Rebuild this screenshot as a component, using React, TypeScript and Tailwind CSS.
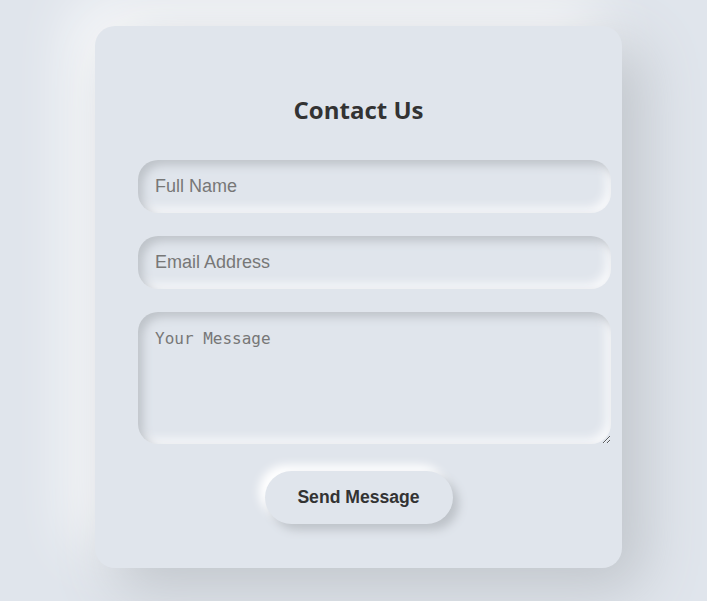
import React from 'react';

// Neumorphic contact form
export default function App() {
  const field =
    'block w-[473px] h-[53px] rounded-[20px] bg-[#e0e5ec] px-[17px] text-[18px] text-[#333] outline-none placeholder:text-[#777] shadow-[inset_5px_5px_10px_#bec3c9,inset_-5px_-5px_10px_#f8f9fb]';

  return (
    <div className="min-h-screen w-full bg-[#e0e5ec] flex items-center justify-center overflow-hidden">
      <div className="ml-[10px] mt-[-8px] w-[527px] h-[542px] rounded-[20px] bg-[#e0e5ec] shadow-[20px_20px_60px_#bec3c9,-20px_-20px_60px_#ffffff] pt-[68px] pl-[43px]">
        <h2 className="w-[441px] text-center text-[24px] leading-[32px] font-bold text-[#333] font-['Open_Sans',sans-serif]">
          Contact Us
        </h2>
        <form className="mt-[34px] flex flex-col gap-[23px] font-['Liberation_Sans',Arial,sans-serif]">
          <input type="text" placeholder="Full Name" className={field} />
          <input type="email" placeholder="Email Address" className={field} />
          <textarea
            autoFocus
            placeholder="Your Message"
            className="block w-[473px] h-[132px] rounded-[20px] bg-[#e0e5ec] px-[17px] pt-[17px] pb-[15px] text-[16px] leading-[20px] text-[#333] caret-[#333] outline-none placeholder:text-[#777] font-['DejaVu_Sans_Mono',monospace] shadow-[inset_5px_5px_10px_#bec3c9,inset_-5px_-5px_10px_#f8f9fb]"
          />
          <div className="w-[441px] flex justify-center pt-[4px]">
            <button
              type="button"
              className="w-[188px] h-[53px] rounded-full bg-[#e0e5ec] text-[17.6px] font-bold text-[#333] shadow-[6px_6px_10px_#bec3c9,-6px_-6px_10px_#ffffff]"
            >
              Send Message
            </button>
          </div>
        </form>
      </div>
    </div>
  );
}
